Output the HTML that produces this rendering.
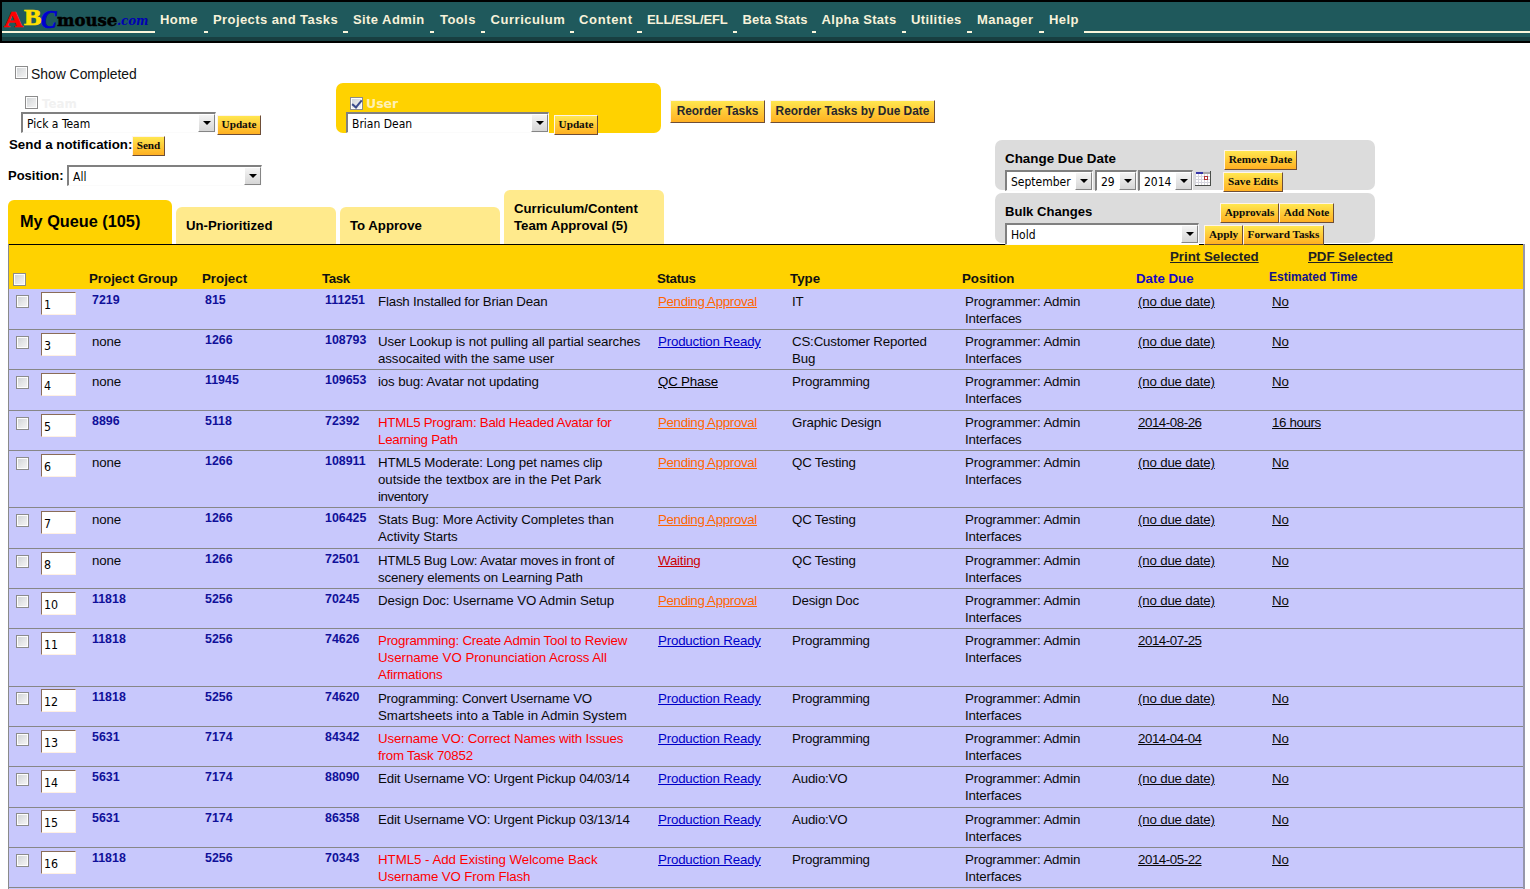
<!DOCTYPE html>
<html lang="en">
<head>
<meta charset="utf-8">
<title>ABCmouse.com - My Queue</title>
<style>
*{box-sizing:border-box;margin:0;padding:0}
html,body{width:1530px;height:889px;overflow:hidden;background:#fff}
body{position:relative;font-family:"Liberation Sans",Arial,sans-serif;font-size:13px;line-height:17px;color:#222}
.abs{position:absolute;white-space:nowrap}
a{color:inherit}
/* ---------- nav ---------- */
#nav{position:absolute;left:0;top:0;width:1530px;height:43px;background:#000}
#nav .teal{position:absolute;left:2px;top:2px;right:0;height:35px;background:#1f595c}
#nav .band{position:absolute;left:2px;top:37px;right:0;height:4px;background:#183f41}
#nav .ln{position:absolute;top:31px;height:2px;background:#fbf6dc}
#nav .mi{position:absolute;top:11px;height:18px;line-height:18px;font-family:"Liberation Sans",Arial,sans-serif;font-weight:bold;font-size:13px;color:#f7f2da;white-space:nowrap;letter-spacing:.42px}
#logo span{position:absolute;white-space:nowrap;line-height:1}
/* ---------- form bits ---------- */
.cb{position:absolute;width:13px;height:13px;border:1px solid #8c8c8c;background:linear-gradient(135deg,#cdd1d4 0%,#e6e7e8 55%,#f6f6f6 100%);box-shadow:inset 0 0 0 1px #fdfdfd}
.sel{position:absolute;height:21px;background:#fff;border:1px solid #fbfbfb;border-top:2px solid #808080;border-left:2px solid #808080;font-family:"DejaVu Sans Condensed","DejaVu Sans","Liberation Sans",sans-serif;font-size:12px;line-height:21px;color:#000;padding-left:4px;white-space:nowrap;overflow:hidden}
.sel i{position:absolute;right:0;top:0;width:17px;height:18px;background:linear-gradient(#f4f4f4,#d6d6d6);border:1px solid #fff;border-right-color:#858585;border-bottom-color:#858585;box-shadow:-1px 0 0 #fff}
.sel i:after{content:"";position:absolute;left:3.5px;top:6px;border:4px solid transparent;border-top:4px solid #000;border-bottom:0}
.btn{position:absolute;height:20px;background:linear-gradient(#ffe750 0%,#ffcb38 50%,#ffb022 100%);border:1px solid #fff4ea;border-right-color:#6e4e38;border-bottom-color:#6e4e38;font-family:"Liberation Serif","Times New Roman",serif;font-weight:bold;font-size:11.2px;line-height:16px;color:#0c0c0c;text-align:center;white-space:nowrap}
.btn.sans{font-family:"Liberation Sans",Arial,sans-serif;font-size:11.9px;height:23px;line-height:21px;color:#26262e}
.lbl{position:absolute;white-space:nowrap;font-weight:bold;color:#000}
.vb{font-family:"DejaVu Sans","Liberation Sans",sans-serif;font-weight:bold;font-size:12.5px;line-height:18px}
.gp{position:absolute;background:#dcdcdc;border-radius:7px}
.cb.chk:after{content:"";position:absolute;left:3px;top:0px;width:4px;height:8px;border:solid #3a4a8c;border-width:0 2px 2px 0;transform:rotate(40deg)}
#cal{position:absolute;left:1195px;top:171px}
.tab{position:absolute;background:#ffea8c;border-radius:6px 6px 0 0}
#top{position:absolute;left:0;top:0;z-index:5}
.tab.on{background:#ffd200}
.tl{font-size:13.2px;line-height:17px}
#tbl{position:absolute;left:8px;top:244px;width:1517px;height:645px;border-left:1px solid #8a8a8a;border-right:2px solid rgba(120,120,120,.62);background:#c8c8fc}
#hd{position:absolute;left:0;top:0;width:1514px;height:45px;background:#ffd200;border-top:1px solid #000}
#hd .h{position:absolute;top:25px;font-weight:bold;font-size:13.3px;line-height:17px;color:#111;white-space:nowrap}
#hd .bl{color:#1608c4}
#hd .sm{font-size:12px;top:24px;color:#12128c}
.u{text-decoration:underline}
.row{position:absolute;left:0;width:1514px;border-bottom:1px solid #878787}
.row{margin-top:-244px}
.row>*{position:absolute;white-space:nowrap}
.row .tx{top:3px;font-size:13.3px;line-height:17px;color:#0a0a0a;letter-spacing:-.18px}
.row.r1 .tx{top:4px}.row.r1 .nv{top:3px}
.row .red{color:#f00}
.row .l{display:block}
.row .nv{top:2px;font-weight:bold;font-size:12.4px;line-height:17px;color:#10109a;text-decoration:none}
.row .so{color:#f60;letter-spacing:-.33px}.row .sb{color:#0000c8}.row .sk{color:#000}.row .sr{color:#c00}
.inp{width:35px;height:23px;background:#fff;border:1px solid #fff0e2;border-top:1px solid #8a6c58;border-left:1px solid #8a6c58;font-family:"DejaVu Sans Condensed","DejaVu Sans",sans-serif;font-size:12.3px;line-height:25px;padding-left:2px;color:#000}
</style>
</head>
<body>
<!-- NAV -->
<div id="nav">
  <div class="teal"></div><div class="band"></div>
  <div class="ln" style="left:2px;width:153px"></div>
  <div id="logo">
    <span style="left:4px;top:7px;font:bold 23px 'Liberation Serif',serif;color:#f00;-webkit-text-stroke:.7px #f00;transform:scaleX(1.14);transform-origin:0 0">A</span>
    <span style="left:24px;top:5px;font:bold 23px 'Liberation Serif',serif;color:#ffe000;-webkit-text-stroke:.7px #ffe000;transform:scaleX(1.14);transform-origin:0 0">B</span>
    <span style="left:41px;top:6px;font:italic bold 24.5px 'Liberation Serif',serif;color:#0000d0;-webkit-text-stroke:.7px #0000d0;transform:scaleX(.95);transform-origin:0 0">C</span>
    <span style="left:57px;top:11px;font:bold 16px 'DejaVu Serif',serif;color:#000;-webkit-text-stroke:.5px #000;transform:scaleX(1.03);transform-origin:0 0">mouse</span>
    <span style="left:117px;top:13px;font:italic bold 13px 'DejaVu Serif',serif;color:#0000b4;transform:scaleX(.9);transform-origin:0 0">.com</span>
  </div>
  <div class="mi" style="left:160px">Home</div>
  <div class="ln" style="left:204px;width:4px"></div>
  <div class="mi" style="left:213px">Projects and Tasks</div>
  <div class="ln" style="left:343px;width:5px"></div>
  <div class="mi" style="left:353px">Site Admin</div>
  <div class="ln" style="left:430px;width:4px"></div>
  <div class="mi" style="left:440px">Tools</div>
  <div class="mi" style="left:490.5px;letter-spacing:.55px">Curriculum</div>
  <div class="mi" style="left:579px;letter-spacing:.65px">Content</div>
  <div class="mi" style="left:647px;letter-spacing:-.08px">ELL/ESL/EFL</div>
  <div class="mi" style="left:742.5px;letter-spacing:.15px">Beta Stats</div>
  <div class="mi" style="left:821.5px;letter-spacing:.32px">Alpha Stats</div>
  <div class="mi" style="left:911px">Utilities</div>
  <div class="mi" style="left:977px">Manager</div>
  <div class="mi" style="left:1049px">Help</div>
  <div class="ln" style="left:481px;width:4px"></div>
  <div class="ln" style="left:570px;width:4px"></div>
  <div class="ln" style="left:637px;width:5px"></div>
  <div class="ln" style="left:733px;width:4px"></div>
  <div class="ln" style="left:812px;width:4px"></div>
  <div class="ln" style="left:902px;width:4px"></div>
  <div class="ln" style="left:967px;width:5px"></div>
  <div class="ln" style="left:1039px;width:5px"></div>
  <div class="ln" style="left:1084px;right:0"></div>
</div>
<!-- TOP CONTROLS -->
<div id="top">
  <div class="cb" style="left:15px;top:66px"></div>
  <div class="abs" style="left:31px;top:65px;font-size:13.9px;line-height:18px;color:#111">Show Completed</div>

  <div class="cb" style="left:25px;top:96px"></div>
  <div class="abs vb" style="left:42px;top:95px;color:#f1f1f1;font-size:11.8px">Team</div>
  <div class="sel" style="left:21px;top:112px;width:195px">Pick a Team<i></i></div>
  <div class="btn" style="left:217px;top:115px;width:44px">Update</div>

  <div class="lbl" style="left:9px;top:136px;font-size:13.3px;line-height:18px">Send a notification:</div>
  <div class="btn" style="left:132px;top:136px;width:33px">Send</div>

  <div class="lbl" style="left:8px;top:167px;font-size:13px;line-height:18px">Position:</div>
  <div class="sel" style="left:67px;top:165px;width:195px">All<i></i></div>

  <div style="position:absolute;left:336px;top:83px;width:325px;height:50px;background:#ffd200;border-radius:7px"></div>
  <div class="cb chk" style="left:350px;top:97px"></div>
  <div class="abs vb" style="left:366px;top:95px;color:#fff0b4">User</div>
  <div class="sel" style="left:346px;top:112px;width:203px">Brian Dean<i></i></div>
  <div class="btn" style="left:554px;top:115px;width:44px">Update</div>

  <div class="btn sans" style="left:670px;top:100px;width:95px">Reorder Tasks</div>
  <div class="btn sans" style="left:770px;top:100px;width:165px">Reorder Tasks by Due Date</div>

  <div class="gp" style="left:995px;top:140.4px;width:380px;height:49.2px"></div>
  <div class="gp" style="left:995px;top:193.4px;width:380px;height:50px"></div>
  <div class="lbl" style="left:1005px;top:150px;font-size:13.4px;line-height:18px">Change Due Date</div>
  <div class="sel" style="left:1005px;top:170px;width:88px">September<i></i></div>
  <div class="sel" style="left:1095px;top:170px;width:42px">29<i></i></div>
  <div class="sel" style="left:1138px;top:170px;width:55px">2014<i></i></div>
  <svg id="cal" width="16" height="15" viewBox="0 0 16 15"><rect width="16" height="15" fill="#d6d6de"/><rect x="1" y="1" width="7" height="2" fill="#3636a8"/><rect x="8" y="1" width="7" height="2" fill="#a8a8a8"/><rect x="1" y="3" width="2" height="2" fill="#fff"/><rect x="1" y="6" width="2" height="2" fill="#fff"/><rect x="1" y="9" width="2" height="2" fill="#fff"/><rect x="1" y="12" width="2" height="2" fill="#fff"/><rect x="4" y="3" width="2" height="2" fill="#fff"/><rect x="4" y="6" width="2" height="2" fill="#fff"/><rect x="4" y="9" width="2" height="2" fill="#fff"/><rect x="4" y="12" width="2" height="2" fill="#fff"/><rect x="7" y="3" width="2" height="2" fill="#fff"/><rect x="7" y="6" width="2" height="2" fill="#fff"/><rect x="7" y="9" width="2" height="2" fill="#fff"/><rect x="7" y="12" width="2" height="2" fill="#fff"/><rect x="10" y="3" width="2" height="2" fill="#fff"/><rect x="10" y="6" width="2" height="2" fill="#fff"/><rect x="10" y="9" width="2" height="2" fill="#fff"/><rect x="10" y="12" width="2" height="2" fill="#fff"/><rect x="13" y="3" width="2" height="2" fill="#fff"/><rect x="13" y="6" width="2" height="2" fill="#fff"/><rect x="13" y="9" width="2" height="2" fill="#fff"/><rect x="13" y="12" width="2" height="2" fill="#fff"/><rect x="9.5" y="5.5" width="3" height="3" fill="#fff" stroke="#b23434"/><rect x="15" y="0" width="1" height="15" fill="#4a4e4a"/><rect x="0" y="14" width="16" height="1" fill="#4a4e4a"/></svg>
  <div class="btn" style="left:1224px;top:150px;width:73px">Remove Date</div>
  <div class="btn" style="left:1223px;top:172px;width:60px">Save Edits</div>
  <div class="lbl" style="left:1005px;top:203px;font-size:13.1px;line-height:18px">Bulk Changes</div>
  <div class="sel" style="left:1005px;top:223px;width:194px;height:22px">Hold<i></i></div>
  <div class="btn" style="left:1220px;top:203px;width:59px">Approvals</div>
  <div class="btn" style="left:1279px;top:203px;width:55px">Add Note</div>
  <div class="btn" style="left:1204px;top:225px;width:39px">Apply</div>
  <div class="btn" style="left:1243px;top:225px;width:81px">Forward Tasks</div>
</div>
<!-- TABS -->
<div id="tabs">
  <div class="tab on" style="left:8px;top:200px;width:164px;height:44px"></div>
  <div class="tab" style="left:176px;top:207px;width:160px;height:37px"></div>
  <div class="tab" style="left:340px;top:207px;width:160px;height:37px"></div>
  <div class="tab" style="left:504px;top:190px;width:160px;height:54px"></div>
  <div class="lbl" style="left:20px;top:211px;font-size:16.3px;line-height:20px">My Queue (105)</div>
  <div class="lbl tl" style="left:186px;top:217px">Un-Prioritized</div>
  <div class="lbl tl" style="left:350px;top:217px">To Approve</div>
  <div class="lbl tl" style="left:514px;top:200px">Curriculum/Content<br>Team Approval (5)</div>
</div>
<!-- TABLE -->
<div id="tbl">
  <div id="hd">
    <div class="cb" style="left:4px;top:28px"></div>
    <a class="h u" style="left:1161px;top:3px;color:#222">Print Selected</a>
    <a class="h u" style="left:1299px;top:3px;color:#222">PDF Selected</a>
    <span class="h" style="left:80px">Project Group</span>
    <span class="h" style="left:193px">Project</span>
    <span class="h" style="left:313px;letter-spacing:-.4px">Task</span>
    <span class="h" style="left:648px;letter-spacing:-.35px">Status</span>
    <span class="h" style="left:781px">Type</span>
    <span class="h" style="left:953px">Position</span>
    <span class="h bl" style="left:1127px">Date Due</span>
    <span class="h bl sm" style="left:1260px">Estimated Time</span>
  </div>
<!--ROWS-->
<div class="row r1" style="top:289px;height:41px">
<div class="cb" style="left:7px;top:6px"></div><div class="inp" style="left:32px;top:3px">1</div>
<a class="nv" style="left:83px">7219</a>
<a class="nv" style="left:196px">815</a><a class="nv" style="left:316px">111251</a>
<span class="tx" style="left:369px"><span class="l" style="letter-spacing:-0.193px">Flash Installed for Brian Dean</span></span>
<a class="tx u so" style="left:649px">Pending Approval</a>
<span class="tx" style="left:783px">IT</span>
<span class="tx" style="left:956px">Programmer: Admin<br>Interfaces</span>
<a class="tx u" style="left:1129px">(no due date)</a>
<a class="tx u" style="left:1263px">No</a>
</div>
<div class="row" style="top:330px;height:40px">
<div class="cb" style="left:7px;top:6px"></div><div class="inp" style="left:32px;top:3px">3</div>
<span class="tx" style="left:83px">none</span>
<a class="nv" style="left:196px">1266</a><a class="nv" style="left:316px">108793</a>
<span class="tx" style="left:369px"><span class="l" style="letter-spacing:-0.113px">User Lookup is not pulling all partial searches</span><span class="l" style="letter-spacing:-0.093px">assocaited with the same user</span></span>
<a class="tx u sb" style="left:649px">Production Ready</a>
<span class="tx" style="left:783px">CS:Customer Reported<br>Bug</span>
<span class="tx" style="left:956px">Programmer: Admin<br>Interfaces</span>
<a class="tx u" style="left:1129px">(no due date)</a>
<a class="tx u" style="left:1263px">No</a>
</div>
<div class="row" style="top:370px;height:41px">
<div class="cb" style="left:7px;top:6px"></div><div class="inp" style="left:32px;top:3px">4</div>
<span class="tx" style="left:83px">none</span>
<a class="nv" style="left:196px">11945</a><a class="nv" style="left:316px">109653</a>
<span class="tx" style="left:369px"><span class="l" style="letter-spacing:-0.134px">ios bug: Avatar not updating</span></span>
<a class="tx u sk" style="left:649px">QC Phase</a>
<span class="tx" style="left:783px">Programming</span>
<span class="tx" style="left:956px">Programmer: Admin<br>Interfaces</span>
<a class="tx u" style="left:1129px">(no due date)</a>
<a class="tx u" style="left:1263px">No</a>
</div>
<div class="row" style="top:411px;height:40px">
<div class="cb" style="left:7px;top:6px"></div><div class="inp" style="left:32px;top:3px">5</div>
<a class="nv" style="left:83px">8896</a>
<a class="nv" style="left:196px">5118</a><a class="nv" style="left:316px">72392</a>
<span class="tx red" style="left:369px"><span class="l" style="letter-spacing:-0.256px">HTML5 Program: Bald Headed Avatar for</span><span class="l" style="letter-spacing:-0.250px">Learning Path</span></span>
<a class="tx u so" style="left:649px">Pending Approval</a>
<span class="tx" style="left:783px">Graphic Design</span>
<span class="tx" style="left:956px">Programmer: Admin<br>Interfaces</span>
<a class="tx u" style="left:1129px;letter-spacing:-.45px">2014-08-26</a>
<a class="tx u" style="left:1263px;letter-spacing:-.36px">16 hours</a>
</div>
<div class="row" style="top:451px;height:57px">
<div class="cb" style="left:7px;top:6px"></div><div class="inp" style="left:32px;top:3px">6</div>
<span class="tx" style="left:83px">none</span>
<a class="nv" style="left:196px">1266</a><a class="nv" style="left:316px">108911</a>
<span class="tx" style="left:369px"><span class="l" style="letter-spacing:-0.159px">HTML5 Moderate: Long pet names clip</span><span class="l" style="letter-spacing:-0.058px">outside the textbox are in the Pet Park</span><span class="l" style="letter-spacing:-0.451px">inventory</span></span>
<a class="tx u so" style="left:649px">Pending Approval</a>
<span class="tx" style="left:783px">QC Testing</span>
<span class="tx" style="left:956px">Programmer: Admin<br>Interfaces</span>
<a class="tx u" style="left:1129px">(no due date)</a>
<a class="tx u" style="left:1263px">No</a>
</div>
<div class="row" style="top:508px;height:41px">
<div class="cb" style="left:7px;top:6px"></div><div class="inp" style="left:32px;top:3px">7</div>
<span class="tx" style="left:83px">none</span>
<a class="nv" style="left:196px">1266</a><a class="nv" style="left:316px">106425</a>
<span class="tx" style="left:369px"><span class="l" style="letter-spacing:-0.037px">Stats Bug: More Activity Completes than</span><span class="l" style="letter-spacing:-0.057px">Activity Starts</span></span>
<a class="tx u so" style="left:649px">Pending Approval</a>
<span class="tx" style="left:783px">QC Testing</span>
<span class="tx" style="left:956px">Programmer: Admin<br>Interfaces</span>
<a class="tx u" style="left:1129px">(no due date)</a>
<a class="tx u" style="left:1263px">No</a>
</div>
<div class="row" style="top:549px;height:40px">
<div class="cb" style="left:7px;top:6px"></div><div class="inp" style="left:32px;top:3px">8</div>
<span class="tx" style="left:83px">none</span>
<a class="nv" style="left:196px">1266</a><a class="nv" style="left:316px">72501</a>
<span class="tx" style="left:369px"><span class="l" style="letter-spacing:-0.247px">HTML5 Bug Low: Avatar moves in front of</span><span class="l" style="letter-spacing:-0.138px">scenery elements on Learning Path</span></span>
<a class="tx u sr" style="left:649px">Waiting</a>
<span class="tx" style="left:783px">QC Testing</span>
<span class="tx" style="left:956px">Programmer: Admin<br>Interfaces</span>
<a class="tx u" style="left:1129px">(no due date)</a>
<a class="tx u" style="left:1263px">No</a>
</div>
<div class="row" style="top:589px;height:40px">
<div class="cb" style="left:7px;top:6px"></div><div class="inp" style="left:32px;top:3px">10</div>
<a class="nv" style="left:83px">11818</a>
<a class="nv" style="left:196px">5256</a><a class="nv" style="left:316px">70245</a>
<span class="tx" style="left:369px"><span class="l" style="letter-spacing:-0.094px">Design Doc: Username VO Admin Setup</span></span>
<a class="tx u so" style="left:649px">Pending Approval</a>
<span class="tx" style="left:783px">Design Doc</span>
<span class="tx" style="left:956px">Programmer: Admin<br>Interfaces</span>
<a class="tx u" style="left:1129px">(no due date)</a>
<a class="tx u" style="left:1263px">No</a>
</div>
<div class="row" style="top:629px;height:58px">
<div class="cb" style="left:7px;top:6px"></div><div class="inp" style="left:32px;top:3px">11</div>
<a class="nv" style="left:83px">11818</a>
<a class="nv" style="left:196px">5256</a><a class="nv" style="left:316px">74626</a>
<span class="tx red" style="left:369px"><span class="l" style="letter-spacing:-0.215px">Programming: Create Admin Tool to Review</span><span class="l" style="letter-spacing:-0.046px">Username VO Pronunciation Across All</span><span class="l" style="letter-spacing:-0.180px">Afirmations</span></span>
<a class="tx u sb" style="left:649px">Production Ready</a>
<span class="tx" style="left:783px">Programming</span>
<span class="tx" style="left:956px">Programmer: Admin<br>Interfaces</span>
<a class="tx u" style="left:1129px;letter-spacing:-.45px">2014-07-25</a>
</div>
<div class="row" style="top:687px;height:40px">
<div class="cb" style="left:7px;top:5px"></div><div class="inp" style="left:32px;top:2px">12</div>
<a class="nv" style="left:83px">11818</a>
<a class="nv" style="left:196px">5256</a><a class="nv" style="left:316px">74620</a>
<span class="tx" style="left:369px"><span class="l" style="letter-spacing:-0.245px">Programming: Convert Username VO</span><span class="l" style="letter-spacing:0.000px">Smartsheets into a Table in Admin System</span></span>
<a class="tx u sb" style="left:649px">Production Ready</a>
<span class="tx" style="left:783px">Programming</span>
<span class="tx" style="left:956px">Programmer: Admin<br>Interfaces</span>
<a class="tx u" style="left:1129px">(no due date)</a>
<a class="tx u" style="left:1263px">No</a>
</div>
<div class="row" style="top:727px;height:40px">
<div class="cb" style="left:7px;top:6px"></div><div class="inp" style="left:32px;top:3px">13</div>
<a class="nv" style="left:83px">5631</a>
<a class="nv" style="left:196px">7174</a><a class="nv" style="left:316px">84342</a>
<span class="tx red" style="left:369px"><span class="l" style="letter-spacing:-0.140px">Username VO: Correct Names with Issues</span><span class="l" style="letter-spacing:-0.214px">from Task 70852</span></span>
<a class="tx u sb" style="left:649px">Production Ready</a>
<span class="tx" style="left:783px">Programming</span>
<span class="tx" style="left:956px">Programmer: Admin<br>Interfaces</span>
<a class="tx u" style="left:1129px;letter-spacing:-.45px">2014-04-04</a>
<a class="tx u" style="left:1263px">No</a>
</div>
<div class="row" style="top:767px;height:41px">
<div class="cb" style="left:7px;top:6px"></div><div class="inp" style="left:32px;top:3px">14</div>
<a class="nv" style="left:83px">5631</a>
<a class="nv" style="left:196px">7174</a><a class="nv" style="left:316px">88090</a>
<span class="tx" style="left:369px"><span class="l" style="letter-spacing:-0.133px">Edit Username VO: Urgent Pickup 04/03/14</span></span>
<a class="tx u sb" style="left:649px">Production Ready</a>
<span class="tx" style="left:783px">Audio:VO</span>
<span class="tx" style="left:956px">Programmer: Admin<br>Interfaces</span>
<a class="tx u" style="left:1129px">(no due date)</a>
<a class="tx u" style="left:1263px">No</a>
</div>
<div class="row" style="top:808px;height:40px">
<div class="cb" style="left:7px;top:5px"></div><div class="inp" style="left:32px;top:2px">15</div>
<a class="nv" style="left:83px">5631</a>
<a class="nv" style="left:196px">7174</a><a class="nv" style="left:316px">86358</a>
<span class="tx" style="left:369px"><span class="l" style="letter-spacing:-0.133px">Edit Username VO: Urgent Pickup 03/13/14</span></span>
<a class="tx u sb" style="left:649px">Production Ready</a>
<span class="tx" style="left:783px">Audio:VO</span>
<span class="tx" style="left:956px">Programmer: Admin<br>Interfaces</span>
<a class="tx u" style="left:1129px">(no due date)</a>
<a class="tx u" style="left:1263px">No</a>
</div>
<div class="row" style="top:848px;height:40px">
<div class="cb" style="left:7px;top:6px"></div><div class="inp" style="left:32px;top:3px">16</div>
<a class="nv" style="left:83px">11818</a>
<a class="nv" style="left:196px">5256</a><a class="nv" style="left:316px">70343</a>
<span class="tx red" style="left:369px"><span class="l" style="letter-spacing:-0.037px">HTML5 - Add Existing Welcome Back</span><span class="l" style="letter-spacing:-0.133px">Username VO From Flash</span></span>
<a class="tx u sb" style="left:649px">Production Ready</a>
<span class="tx" style="left:783px">Programming</span>
<span class="tx" style="left:956px">Programmer: Admin<br>Interfaces</span>
<a class="tx u" style="left:1129px;letter-spacing:-.45px">2014-05-22</a>
<a class="tx u" style="left:1263px">No</a>
</div>
<!--/ROWS-->
</div>
</body>
</html>
